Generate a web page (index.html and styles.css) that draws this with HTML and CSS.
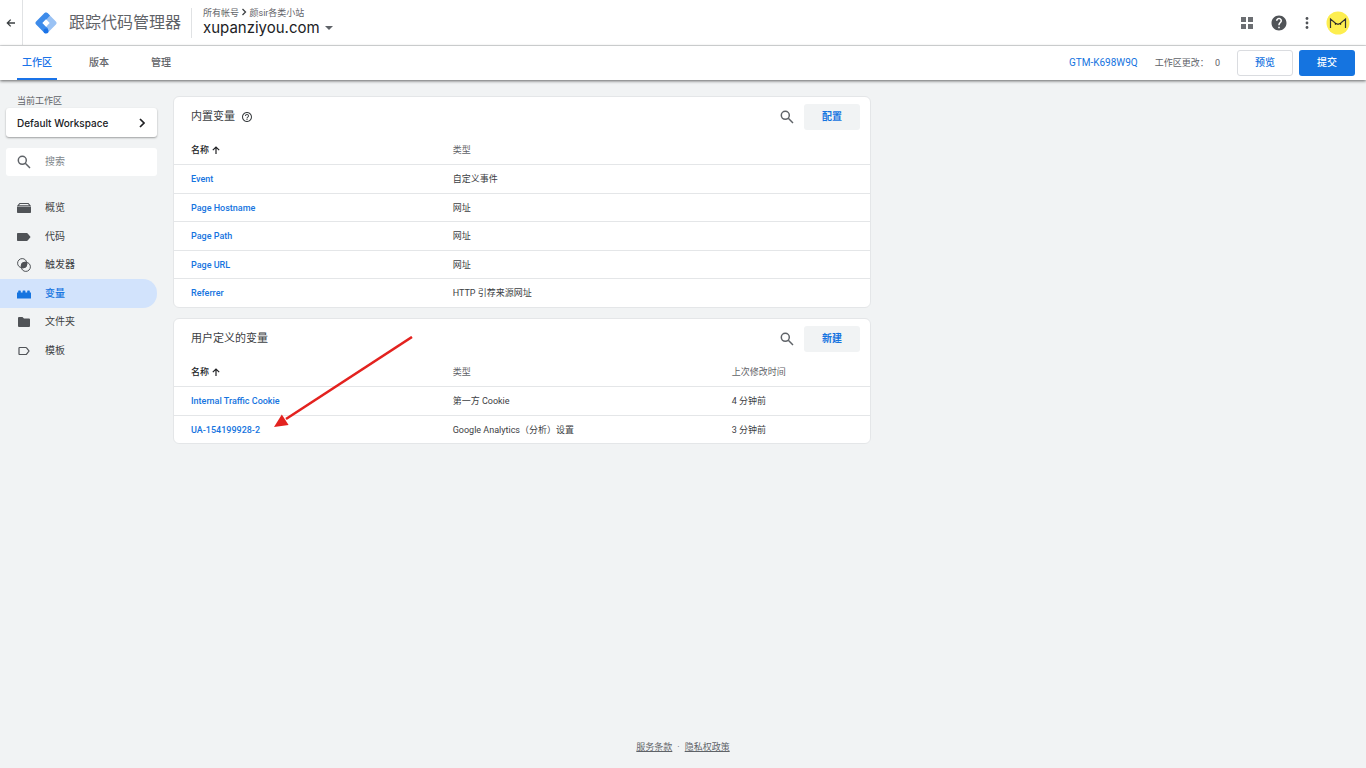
FILE: index.html
```html
<!DOCTYPE html>
<html lang="zh-CN">
<head>
    <meta charset="UTF-8">
    <meta name="viewport" content="width=device-width, initial-scale=1.0">
    <title>跟踪代码管理器</title>
    <link rel="stylesheet" href="styles.css">
</head>
<body>
    <!-- Top bar -->
    <header class="topbar">
        <button class="back" aria-label="返回">
            <svg width="10" height="10" viewBox="0 0 10 10" fill="none" stroke="#3c4043" stroke-width="1.3"><path d="M9 5H1.5M4.7 1.6L1.3 5l3.4 3.4"/></svg>
        </button>
        <svg class="logo" width="22" height="22" viewBox="0 0 22 22">
            <path fill="#9ac2f4" d="M9.500 1.100a2.200 2.200 0 0 1 3 0l8.400 8.400a2.200 2.200 0 0 1 0 3L12.500 20.900 11 11z"/>
            <path fill="#3d8bea" d="M9.500 1.100a2.200 2.200 0 0 1 3 0L15 3.600 8 11l5 5.500-2 4.900-1.500-.5L1.100 12.500a2.200 2.200 0 0 1 0-3z"/>
            <circle cx="11" cy="19" r="2.500" fill="#1a73e8"/>
            <path fill="#fff" d="M11 7.300l3.700 3.700-3.700 3.700L7.300 11z"/>
        </svg>
        <span class="product">跟踪代码管理器</span>
        <div class="account">
            <div class="crumbs">所有帐号
                <svg width="6" height="8" viewBox="0 0 6 8" fill="none" stroke="#3c4043" stroke-width="1.3"><path d="M1.500 1l3 3-3 3"/></svg>
                颜sir各类小站</div>
            <button class="container-name">xupanziyou.com
                <svg width="8" height="4" viewBox="0 0 8 4"><path fill="#5f6368" d="M0 0h8L4 4z"/></svg>
            </button>
        </div>
        <div class="tools">
            <button aria-label="应用">
                <svg width="12" height="12" viewBox="0 0 12 12" fill="#6b6e72"><path d="M0 0h5v5H0zM7 0h5v5H7zM0 7h5v5H0zM7 7h5v5H7z"/></svg>
            </button>
            <button aria-label="帮助">
                <svg width="18" height="18" viewBox="0 0 24 24" fill="#505357"><path d="M12 2C6.480 2 2 6.480 2 12s4.480 10 10 10 10-4.480 10-10S17.520 2 12 2zm1 17h-2v-2h2v2zm2.070-7.750l-.9.920C13.450 12.900 13 13.500 13 15h-2v-.5c0-1.100.450-2.100 1.170-2.830l1.240-1.260c.370-.360.590-.860.590-1.410 0-1.100-.9-2-2-2s-2 .9-2 2H8c0-2.210 1.790-4 4-4s4 1.790 4 4c0 .880-.360 1.680-.930 2.250z"/></svg>
            </button>
            <button aria-label="更多">
                <svg width="4" height="12" viewBox="0 0 4 12" fill="#505357"><circle cx="2" cy="1.500" r="1.400"/><circle cx="2" cy="6" r="1.400"/><circle cx="2" cy="10.500" r="1.400"/></svg>
            </button>
            <button aria-label="帐号">
                <svg width="24" height="24" viewBox="0 0 24 24"><circle cx="12" cy="12" r="11.500" fill="#fdee4f"/><path d="M4.500 17V8l5 4.300L12 13.300l2.500-1L19.500 8v9" fill="none" stroke="#333" stroke-width="1.200"/><circle cx="9.500" cy="13" r=".8"/><circle cx="14.500" cy="13" r=".8"/></svg>
            </button>
        </div>
    </header>

    <!-- Tabs -->
    <nav class="tabs">
        <a href="#" class="tab active">工作区</a>
        <a href="#" class="tab">版本</a>
        <a href="#" class="tab">管理</a>
        <div class="actions">
            <a href="#" class="gtm-id">GTM-K698W9Q</a>
            <span class="changes">工作区更改： <span class="count">0</span></span>
            <button class="btn outline">预览</button>
            <button class="btn primary">提交</button>
        </div>
    </nav>

    <div class="page">
        <aside class="sidebar">
            <p class="label">当前工作区</p>
            <button class="workspace">Default Workspace
                <svg width="6" height="10" viewBox="0 0 6 10" fill="none" stroke="#202124" stroke-width="1.700"><path d="M1 1l4 4-4 4"/></svg>
            </button>
            <label class="search">
                <svg width="14" height="14" viewBox="0 0 14 14" fill="none" stroke="#5f6368" stroke-width="1.500"><circle cx="5.300" cy="5.300" r="4"/><path d="M8.300 8.300l4.700 4.700"/></svg>
                <input type="text" placeholder="搜索" aria-label="搜索">
            </label>
            <nav class="menu">
                <a href="#">
                    <svg width="14" height="14" viewBox="0 0 14 14" fill="#505357"><path d="M2.500 2h9L14 5H0zM3 3L2 4.300h10L11 3z" fill-rule="evenodd"/><path d="M0 5.500h14v5.700a.8.8 0 0 1-.8.8H.8a.8.8 0 0 1-.8-.8z"/></svg>
                    概览</a>
                <a href="#">
                    <svg width="14" height="14" viewBox="0 0 14 14" fill="#505357"><path d="M.7 3h9.100c.4 0 .7.200.9.500L13.600 7l-2.900 3.500c-.2.300-.5.500-.9.500H.7a.7.7 0 0 1-.7-.7V3.700c0-.4.300-.7.700-.7z"/></svg>
                    代码</a>
                <a href="#">
                    <svg width="14" height="14" viewBox="0 0 14 14" fill="none" stroke="#505357"><circle cx="5.200" cy="5.200" r="4.600"/><circle cx="8.800" cy="8.800" r="4.600"/><path fill="#505357" d="M9.800 4.300A4.600 4.600 0 0 0 4.300 9.800 4.600 4.600 0 0 0 9.800 4.300z"/><circle cx="7" cy="7" r="2.600" fill="#505357"/></svg>
                    触发器</a>
                <a href="#" class="active">
                    <svg width="14" height="14" viewBox="0 0 14 14" fill="#1574e0"><path d="M1.200 5.500V4c0-.4.200-.6.600-.6h1.400c.4 0 .6.200.6.600v1.500h1.800V4c0-.4.200-.6.600-.6h1.600c.4 0 .6.200.6.600v1.500h1.800V4c0-.4.200-.6.600-.6h1.400c.4 0 .6.200.6.600v1.500H14v6H0v-6z"/></svg>
                    变量</a>
                <a href="#">
                    <svg width="14" height="14" viewBox="0 0 14 14" fill="#505357"><path d="M2 2h3.500L7 3.500h5a1 1 0 0 1 1 1V11a1 1 0 0 1-1 1H2a1 1 0 0 1-1-1V3a1 1 0 0 1 1-1z"/></svg>
                    文件夹</a>
                <a href="#">
                    <svg width="14" height="14" viewBox="0 0 14 14" fill="none" stroke="#505357" stroke-width="1.200"><path d="M2.600 3.500h6.200c.4 0 .6.100.8.400L12 7l-2.400 3.100c-.2.300-.4.400-.8.400H2.600a.6.6 0 0 1-.6-.6V4.100c0-.3.300-.6.600-.6z"/></svg>
                    模板</a>
            </nav>
        </aside>

        <main class="content">
            <!-- Built-in variables -->
            <section class="card">
                <div class="card-head">
                    <h2>内置变量</h2>
                    <svg width="12" height="12" viewBox="0 0 24 24" fill="#3c4043"><path d="M11 18h2v-2h-2v2zm1-16C6.480 2 2 6.480 2 12s4.480 10 10 10 10-4.480 10-10S17.520 2 12 2zm0 18c-4.410 0-8-3.590-8-8s3.590-8 8-8 8 3.590 8 8-3.590 8-8 8zm0-14c-2.210 0-4 1.790-4 4h2c0-1.100.9-2 2-2s2 .9 2 2c0 2-3 1.750-3 5h2c0-2.250 3-2.500 3-5 0-2.210-1.790-4-4-4z"/></svg>
                    <div class="card-actions">
                        <button class="icon-btn" aria-label="搜索内置变量">
                            <svg width="14" height="14" viewBox="0 0 14 14" fill="none" stroke="#5f6368" stroke-width="1.500"><circle cx="5.300" cy="5.300" r="4"/><path d="M8.300 8.300l4.700 4.700"/></svg>
                        </button>
                        <button class="btn grey">配置</button>
                    </div>
                </div>
                <table>
                    <thead>
                        <tr>
                            <th class="name sorted">名称 <svg width="8" height="8" viewBox="0 0 8 8" fill="none" stroke="#202124" stroke-width="1.200"><path d="M4 8V1M.8 4.200L4 1l3.200 3.200"/></svg></th>
                            <th>类型</th>
                        </tr>
                    </thead>
                    <tbody>
                        <tr><td><a href="#">Event</a></td><td>自定义事件</td></tr>
                        <tr><td><a href="#">Page Hostname</a></td><td>网址</td></tr>
                        <tr><td><a href="#">Page Path</a></td><td>网址</td></tr>
                        <tr><td><a href="#">Page URL</a></td><td>网址</td></tr>
                        <tr><td><a href="#">Referrer</a></td><td>HTTP 引荐来源网址</td></tr>
                    </tbody>
                </table>
            </section>

            <!-- User-defined variables -->
            <section class="card">
                <div class="card-head">
                    <h2>用户定义的变量</h2>
                    <div class="card-actions">
                        <button class="icon-btn" aria-label="搜索用户定义的变量">
                            <svg width="14" height="14" viewBox="0 0 14 14" fill="none" stroke="#5f6368" stroke-width="1.500"><circle cx="5.300" cy="5.300" r="4"/><path d="M8.300 8.300l4.700 4.700"/></svg>
                        </button>
                        <button class="btn grey">新建</button>
                    </div>
                </div>
                <table>
                    <thead>
                        <tr>
                            <th class="name sorted">名称 <svg width="8" height="8" viewBox="0 0 8 8" fill="none" stroke="#202124" stroke-width="1.200"><path d="M4 8V1M.8 4.200L4 1l3.200 3.200"/></svg></th>
                            <th class="type">类型</th>
                            <th>上次修改时间</th>
                        </tr>
                    </thead>
                    <tbody>
                        <tr><td><a href="#">Internal Traffic Cookie</a></td><td>第一方 Cookie</td><td>4 分钟前</td></tr>
                        <tr><td><a href="#">UA-154199928-2</a></td><td>Google Analytics（分析）设置</td><td>3 分钟前</td></tr>
                    </tbody>
                </table>
                <svg class="arrow" width="140" height="94" viewBox="0 0 140 94"><path stroke="#e3221f" stroke-width="2.600" d="M138 1L12 83"/><path fill="#e3221f" d="M0 91l7.800-12.500 6.800 10.500z"/></svg>
            </section>
        </main>
    </div>

    <footer class="footer">
        <a href="#">服务条款</a><span>·</span><a href="#">隐私权政策</a>
    </footer>
</body>
</html>
```

FILE: styles.css
```css
* {
    margin: 0;
    padding: 0;
    box-sizing: border-box;
}

body {
    min-height: 100vh;
    display: flex;
    flex-direction: column;
    background: #f1f3f4;
    color: #3c4043;
    font-family: Roboto, "Noto Sans CJK SC", sans-serif;
    font-size: 10px;
    line-height: 14px;
}

a {
    color: #1574e0;
    text-decoration: none;
}

button {
    border: none;
    background: none;
    font: inherit;
    color: inherit;
    cursor: pointer;
}

svg {
    flex: none;
}

/* Top bar */
.topbar {
    display: flex;
    align-items: center;
    height: 46px;
    background: #fff;
    border-bottom: 1px solid #e0e2e4;
}

.back {
    display: flex;
    align-items: center;
    justify-content: center;
    width: 23px;
    height: 100%;
    border-right: 1px solid #e0e2e4;
}

.logo {
    margin: 0 12px;
}

.product {
    font-size: 16px;
    line-height: 22px;
    color: #5f6368;
}

.account {
    margin-left: 10px;
    padding-left: 11px;
    border-left: 1px solid #e0e2e4;
}

.crumbs {
    font-size: 9px;
    line-height: 10px;
    color: #5f6368;
}

.container-name {
    display: flex;
    align-items: center;
    gap: 5px;
    font-family: Inter, sans-serif;
    font-size: 15px;
    line-height: 20px;
    color: #202124;
}

.tools {
    display: flex;
    align-items: center;
    gap: 17px;
    margin-left: auto;
    padding-right: 16px;
}

.tools button {
    display: flex;
}

/* Tabs */
.tabs {
    position: relative;
    display: flex;
    align-items: center;
    height: 34px;
    padding: 0 11px 0 17px;
    background: #fff;
    box-shadow: 0 1px 3px rgba(0, 0, 0, 0.6);
}

.tab {
    height: 34px;
    margin-right: 27px;
    padding: 0 5px;
    line-height: 34px;
    font-weight: 500;
    color: #5f6368;
}

.tab + .tab {
    margin-right: 32px;
}

.tab.active {
    color: #1a73e8;
    border-bottom: 2px solid #1a73e8;
    border-radius: 2px 2px 0 0;
}

.actions {
    display: flex;
    align-items: center;
    gap: 6px;
    margin-left: auto;
}

.gtm-id {
    margin-right: 11px;
}

.changes {
    margin-right: 11px;
    font-size: 9px;
    color: #5f6368;
}

.count {
    margin-left: 4px;
}

.btn {
    height: 26px;
    min-width: 56px;
    border-radius: 3px;
    font-weight: 500;
    line-height: 26px;
}

.btn.outline {
    border: 1px solid #dadce0;
    color: #1574e0;
    line-height: 24px;
}

.btn.primary {
    background: #1574e0;
    color: #fff;
}

.btn.grey {
    background: #f1f3f4;
    color: #1574e0;
    font-weight: 700;
}

/* Page */
.page {
    flex: 1;
    display: flex;
    align-items: flex-start;
    gap: 16px;
    padding-right: 16px;
}

.sidebar {
    flex: none;
    width: 157px;
    padding-top: 14px;
}

.label {
    padding-left: 17px;
    font-size: 9px;
    line-height: 14px;
    color: #5f6368;
}

.workspace {
    display: flex;
    align-items: center;
    justify-content: space-between;
    width: 151px;
    height: 29px;
    margin-left: 6px;
    padding: 0 12px 0 11px;
    background: #fff;
    border-radius: 3px;
    box-shadow: 0 1px 2px rgba(0, 0, 0, 0.35);
    font-family: Inter, sans-serif;
    font-weight: 500;
    color: #202124;
}

.search {
    display: flex;
    align-items: center;
    gap: 14px;
    height: 28px;
    margin: 11px 0 18px 6px;
    padding: 0 11px;
    background: #fff;
    border-radius: 3px;
}

.search input {
    width: 100%;
    border: none;
    outline: none;
    background: none;
    font: inherit;
}

.search input::placeholder {
    color: #80868b;
}

.menu a {
    display: flex;
    align-items: center;
    gap: 14px;
    height: 28px;
    padding-left: 17px;
    border-radius: 0 14px 14px 0;
    color: #3c4043;
}

.menu a:nth-child(even) {
    height: 29px;
}

.menu a.active {
    background: #d2e3fc;
    color: #1574e0;
    font-weight: 500;
}

/* Cards */
.content {
    flex: 1;
    max-width: 698px;
    padding-top: 16px;
}

.card {
    position: relative;
    margin-bottom: 10px;
    background: #fff;
    border: 1px solid #e4e6e8;
    border-radius: 6px;
}

.card-head {
    display: flex;
    align-items: center;
    gap: 6px;
    height: 39px;
    padding: 0 10px 0 17px;
}

h2 {
    font-size: 11px;
    font-weight: 400;
    line-height: 16px;
}

.card-actions {
    display: flex;
    align-items: center;
    gap: 10px;
    margin-left: auto;
}

.icon-btn {
    display: flex;
}

table {
    width: 100%;
    border-collapse: separate;
    border-spacing: 0;
    table-layout: fixed;
}

th, td {
    height: 29px;
    padding-left: 17px;
    text-align: left;
    white-space: nowrap;
}

th {
    height: 28px;
    font-size: 9px;
    font-weight: 400;
    color: #5f6368;
}

.name {
    width: 37.6%;
}

.type {
    width: 40.1%;
}

.sorted {
    font-weight: 500;
    color: #202124;
}

.sorted svg {
    margin-left: 1px;
    vertical-align: -1px;
}

td {
    border-top: 1px solid #e4e6e8;
    font-size: 9px;
}

td a {
    font-weight: 500;
}

tr:nth-child(even) td {
    height: 28px;
}

/* Arrow pointing at the analytics variable */
.arrow {
    position: absolute;
    top: 17px;
    left: 100px;
}

.footer {
    display: flex;
    justify-content: center;
    gap: 5px;
    padding-bottom: 14px;
    font-size: 9px;
    color: #5f6368;
}

.footer a {
    color: #5f6368;
    text-decoration: underline;
}
```
